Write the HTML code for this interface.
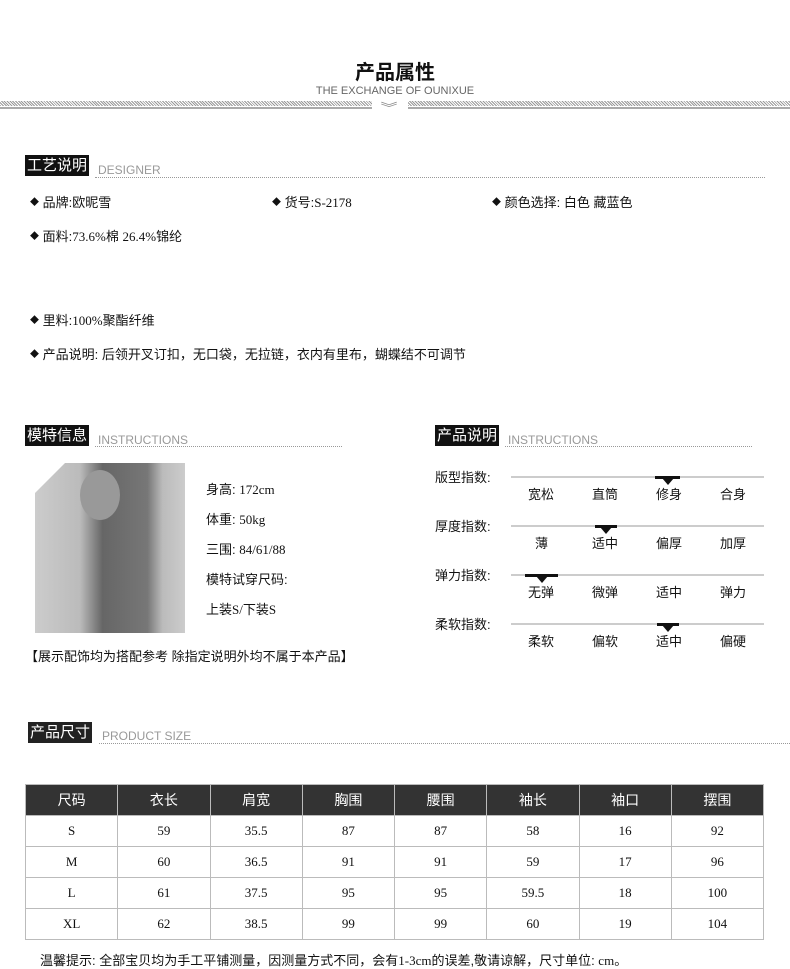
<!DOCTYPE html>
<html><head><meta charset="utf-8"><style>
body{margin:0;width:790px;height:968px;background:#fff;position:relative;font-family:"Liberation Sans","Noto Sans CJK SC",sans-serif;color:#111;overflow:hidden}
.a{position:absolute;white-space:nowrap}
.hd{position:absolute;height:21px;background:#111;color:#fff;font-size:15px;line-height:21px;padding:0 2px}
.en{position:absolute;font-size:12px;color:#999;}
.dot{position:absolute;height:0;border-top:1px dotted #999}
.t{font-size:13px}
.m{font-family:"Liberation Serif","Noto Sans CJK SC",serif}
.bar{position:absolute;height:2px;background:#ccc}
.mk{position:absolute;height:3px;background:#111}
.mk:after{content:"";position:absolute;left:50%;margin-left:-6px;top:2px;border-left:6px solid transparent;border-right:6px solid transparent;border-top:7px solid #111}
table{position:absolute;left:25px;top:784px;width:739px;border-collapse:collapse;font-size:13px;text-align:center}
td,th{border:1px solid #bbb;height:30px;padding:0}
th{background:#333;color:#fff;font-weight:normal;font-size:14px;height:30px}
td{font-family:"Liberation Serif",serif}
.b{font-size:9px;vertical-align:2px}
</style></head><body>
<div class="a" style="left:0;width:790px;top:56px;text-align:center;font-size:20px;font-weight:bold">产品属性</div>
<div class="a" style="left:0;width:790px;top:85px;text-align:center;font-size:11px;color:#666">THE EXCHANGE OF OUNIXUE</div>
<div class="a" style="left:0;top:101px;width:372px;height:5px;background:repeating-linear-gradient(45deg,#999 0 1px,#fff 1px 2px)"></div>
<div class="a" style="left:0;top:107px;width:372px;height:2px;background:#aaa"></div>
<div class="a" style="left:408px;top:101px;width:382px;height:5px;background:repeating-linear-gradient(45deg,#999 0 1px,#fff 1px 2px)"></div>
<div class="a" style="left:408px;top:107px;width:382px;height:2px;background:#aaa"></div>
<div class="a" style="left:383px;top:99px;font-size:12px;color:#888;transform:scaleX(1.4)">︾</div>

<div class="hd" style="left:25px;top:155px">工艺说明</div>
<div class="en" style="left:98px;top:163px">DESIGNER</div>
<div class="dot" style="left:95px;right:25px;top:177px"></div>
<div class="a t" style="left:30px;top:192px"><span class="b">◆</span> 品牌:欧昵雪</div>
<div class="a t" style="left:272px;top:192px"><span class="b">◆</span> 货号:<span class="m">S-2178</span></div>
<div class="a t" style="left:492px;top:192px"><span class="b">◆</span> 颜色选择: 白色 藏蓝色</div>
<div class="a t" style="left:30px;top:226px"><span class="b">◆</span> 面料:<span class="m">73.6%</span>棉 <span class="m">26.4%</span>锦纶</div>
<div class="a t" style="left:30px;top:310px"><span class="b">◆</span> 里料:<span class="m">100%</span>聚酯纤维</div>
<div class="a t" style="left:30px;top:344px"><span class="b">◆</span> 产品说明: 后领开叉订扣，无口袋，无拉链，衣内有里布，蝴蝶结不可调节</div>

<div class="hd" style="left:25px;top:425px">模特信息</div>
<div class="en" style="left:98px;top:433px">INSTRUCTIONS</div>
<div class="dot" style="left:95px;width:247px;top:446px"></div>
<div class="a" style="left:35px;top:463px;width:150px;height:170px;background:linear-gradient(90deg,#ccc 0,#bbb 30%,#666 45%,#777 75%,#bbb 85%,#ccc 100%);clip-path:polygon(30px 0,100% 0,100% 100%,0 100%,0 30px)"></div>
<div class="a" style="left:80px;top:470px;width:40px;height:50px;border-radius:50%;background:#999"></div>
<div class="a t" style="left:206px;top:479px">身高: <span class="m">172cm</span></div>
<div class="a t" style="left:206px;top:509px">体重: <span class="m">50kg</span></div>
<div class="a t" style="left:206px;top:539px">三围: <span class="m">84/61/88</span></div>
<div class="a t" style="left:206px;top:569px">模特试穿尺码:</div>
<div class="a t" style="left:206px;top:599px">上装<span class="m">S/</span>下装<span class="m">S</span></div>
<div class="a t" style="left:25px;top:646px">【展示配饰均为搭配参考 除指定说明外均不属于本产品】</div>

<div class="hd" style="left:435px;top:425px">产品说明</div>
<div class="en" style="left:508px;top:433px">INSTRUCTIONS</div>
<div class="dot" style="left:505px;width:247px;top:446px"></div>

<div class="a t" style="left:435px;top:467px">版型指数:</div>
<div class="bar" style="left:511px;width:253px;top:476px"></div><div class="mk" style="left:655px;width:25px;top:476px"></div>
<div class="a t" style="left:528px;top:484px">宽松</div><div class="a t" style="left:592px;top:484px">直筒</div><div class="a t" style="left:656px;top:484px">修身</div><div class="a t" style="left:720px;top:484px">合身</div>

<div class="a t" style="left:435px;top:516px">厚度指数:</div>
<div class="bar" style="left:511px;width:253px;top:525px"></div><div class="mk" style="left:595px;width:22px;top:525px"></div>
<div class="a t" style="left:535px;top:533px">薄</div><div class="a t" style="left:592px;top:533px">适中</div><div class="a t" style="left:656px;top:533px">偏厚</div><div class="a t" style="left:720px;top:533px">加厚</div>

<div class="a t" style="left:435px;top:565px">弹力指数:</div>
<div class="bar" style="left:511px;width:253px;top:574px"></div><div class="mk" style="left:525px;width:33px;top:574px"></div>
<div class="a t" style="left:528px;top:582px">无弹</div><div class="a t" style="left:592px;top:582px">微弹</div><div class="a t" style="left:656px;top:582px">适中</div><div class="a t" style="left:720px;top:582px">弹力</div>

<div class="a t" style="left:435px;top:614px">柔软指数:</div>
<div class="bar" style="left:511px;width:253px;top:623px"></div><div class="mk" style="left:657px;width:22px;top:623px"></div>
<div class="a t" style="left:528px;top:631px">柔软</div><div class="a t" style="left:592px;top:631px">偏软</div><div class="a t" style="left:656px;top:631px">适中</div><div class="a t" style="left:720px;top:631px">偏硬</div>

<div class="hd" style="left:28px;top:722px;background:#222">产品尺寸</div>
<div class="en" style="left:102px;top:729px">PRODUCT SIZE</div>
<div class="dot" style="left:99px;right:0;top:743px"></div>

<table>
<tr><th>尺码</th><th>衣长</th><th>肩宽</th><th>胸围</th><th>腰围</th><th>袖长</th><th>袖口</th><th>摆围</th></tr>
<tr><td>S</td><td>59</td><td>35.5</td><td>87</td><td>87</td><td>58</td><td>16</td><td>92</td></tr>
<tr><td>M</td><td>60</td><td>36.5</td><td>91</td><td>91</td><td>59</td><td>17</td><td>96</td></tr>
<tr><td>L</td><td>61</td><td>37.5</td><td>95</td><td>95</td><td>59.5</td><td>18</td><td>100</td></tr>
<tr><td>XL</td><td>62</td><td>38.5</td><td>99</td><td>99</td><td>60</td><td>19</td><td>104</td></tr>
</table>
<div class="a t" style="left:40px;top:950px">温馨提示: 全部宝贝均为手工平铺测量，因测量方式不同，会有<span class="m">1-3cm</span>的误差,敬请谅解，尺寸单位: <span class="m">cm</span>。</div>
</body></html>
